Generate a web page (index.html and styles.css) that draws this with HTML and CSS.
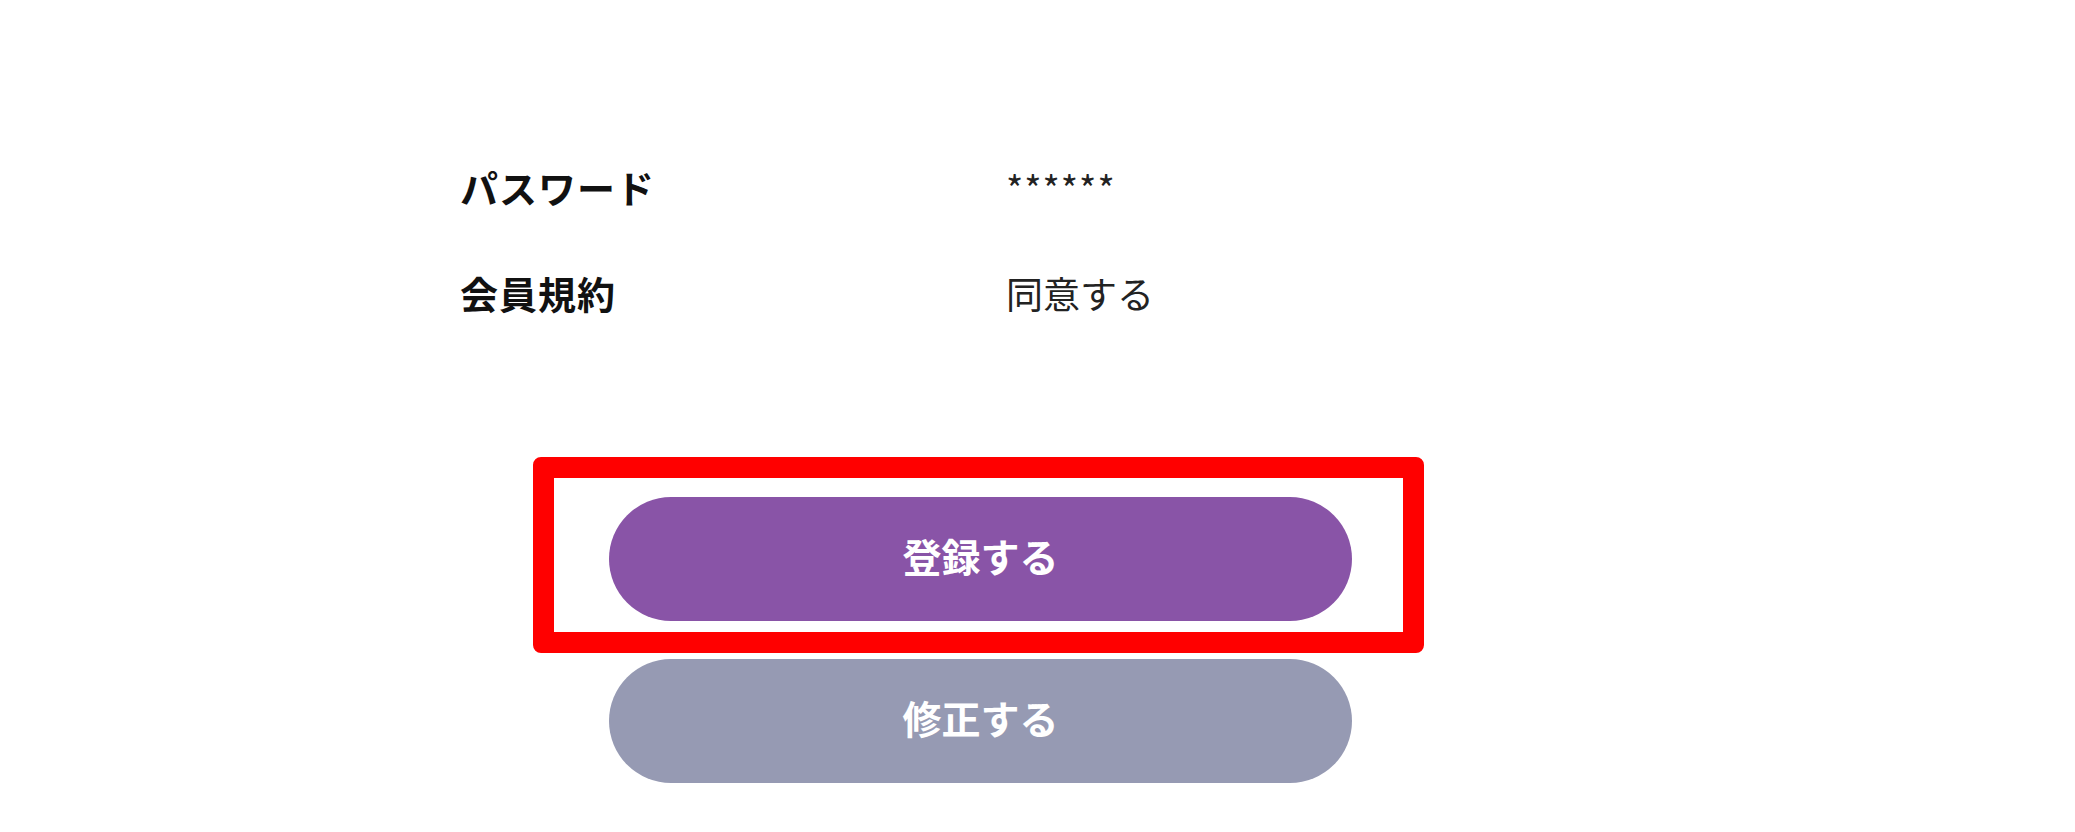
FILE: index.html
```html
<!DOCTYPE html>
<html lang="ja">
<head>
  <meta charset="UTF-8" />
  <meta name="viewport" content="width=device-width, initial-scale=1.0"/>
  <title>入力内容の確認</title>
  <link rel="stylesheet" href="styles.css">
</head>
<body>
  <div class="confirm">
    <dl class="confirm-list">
      <div class="fila">
        <dt>パスワード</dt>
        <dd class="mask">******</dd>
      </div>
      <div class="fila">
        <dt>会員規約</dt>
        <dd>同意する</dd>
      </div>
    </dl>

    <div class="acciones">
      <button class="boton boton-registrar">登録する</button>
      <button class="boton boton-corregir">修正する</button>
      <span class="marca"></span>
    </div>
  </div>
</body>
</html>
```

FILE: styles.css
```css
body {
  margin: 0;
  background-color: #fff;
  color: #111;
  font-family: "Noto Sans CJK JP", "Noto Sans", sans-serif;
}

.confirm {
  padding: 134px 0 0 460px;
}

.confirm-list {
  margin: 0;
}

.fila {
  display: grid;
  grid-template-columns: 546px 1fr;
  align-items: center;
  height: 106px;
}

.fila dt {
  font-size: 38px;
  font-weight: 700;
  letter-spacing: 1px;
  line-height: 1;
}

.fila dd {
  margin: 0;
  font-size: 37px;
  line-height: 1;
  color: #222;
}

.fila .mask {
  letter-spacing: 1px;
}

.acciones {
  position: relative;
  display: flex;
  flex-direction: column;
  gap: 38px;
  width: 743px;
  margin: 151px 0 0 149px;
}

.boton {
  height: 124px;
  padding: 0 0 8px;
  border: none;
  border-radius: 62px;
  font-family: inherit;
  font-size: 39px;
  font-weight: 700;
  color: #fff;
  cursor: pointer;
}

.boton-registrar {
  background-color: #8954a7;
}

.boton-corregir {
  background-color: #969ab3;
}

/* recuadro rojo de anotación */
.marca {
  position: absolute;
  left: -76px;
  top: -40px;
  width: 891px;
  height: 196px;
  box-sizing: border-box;
  border: 21px solid #ff0000;
  border-radius: 8px;
  pointer-events: none;
}
```
